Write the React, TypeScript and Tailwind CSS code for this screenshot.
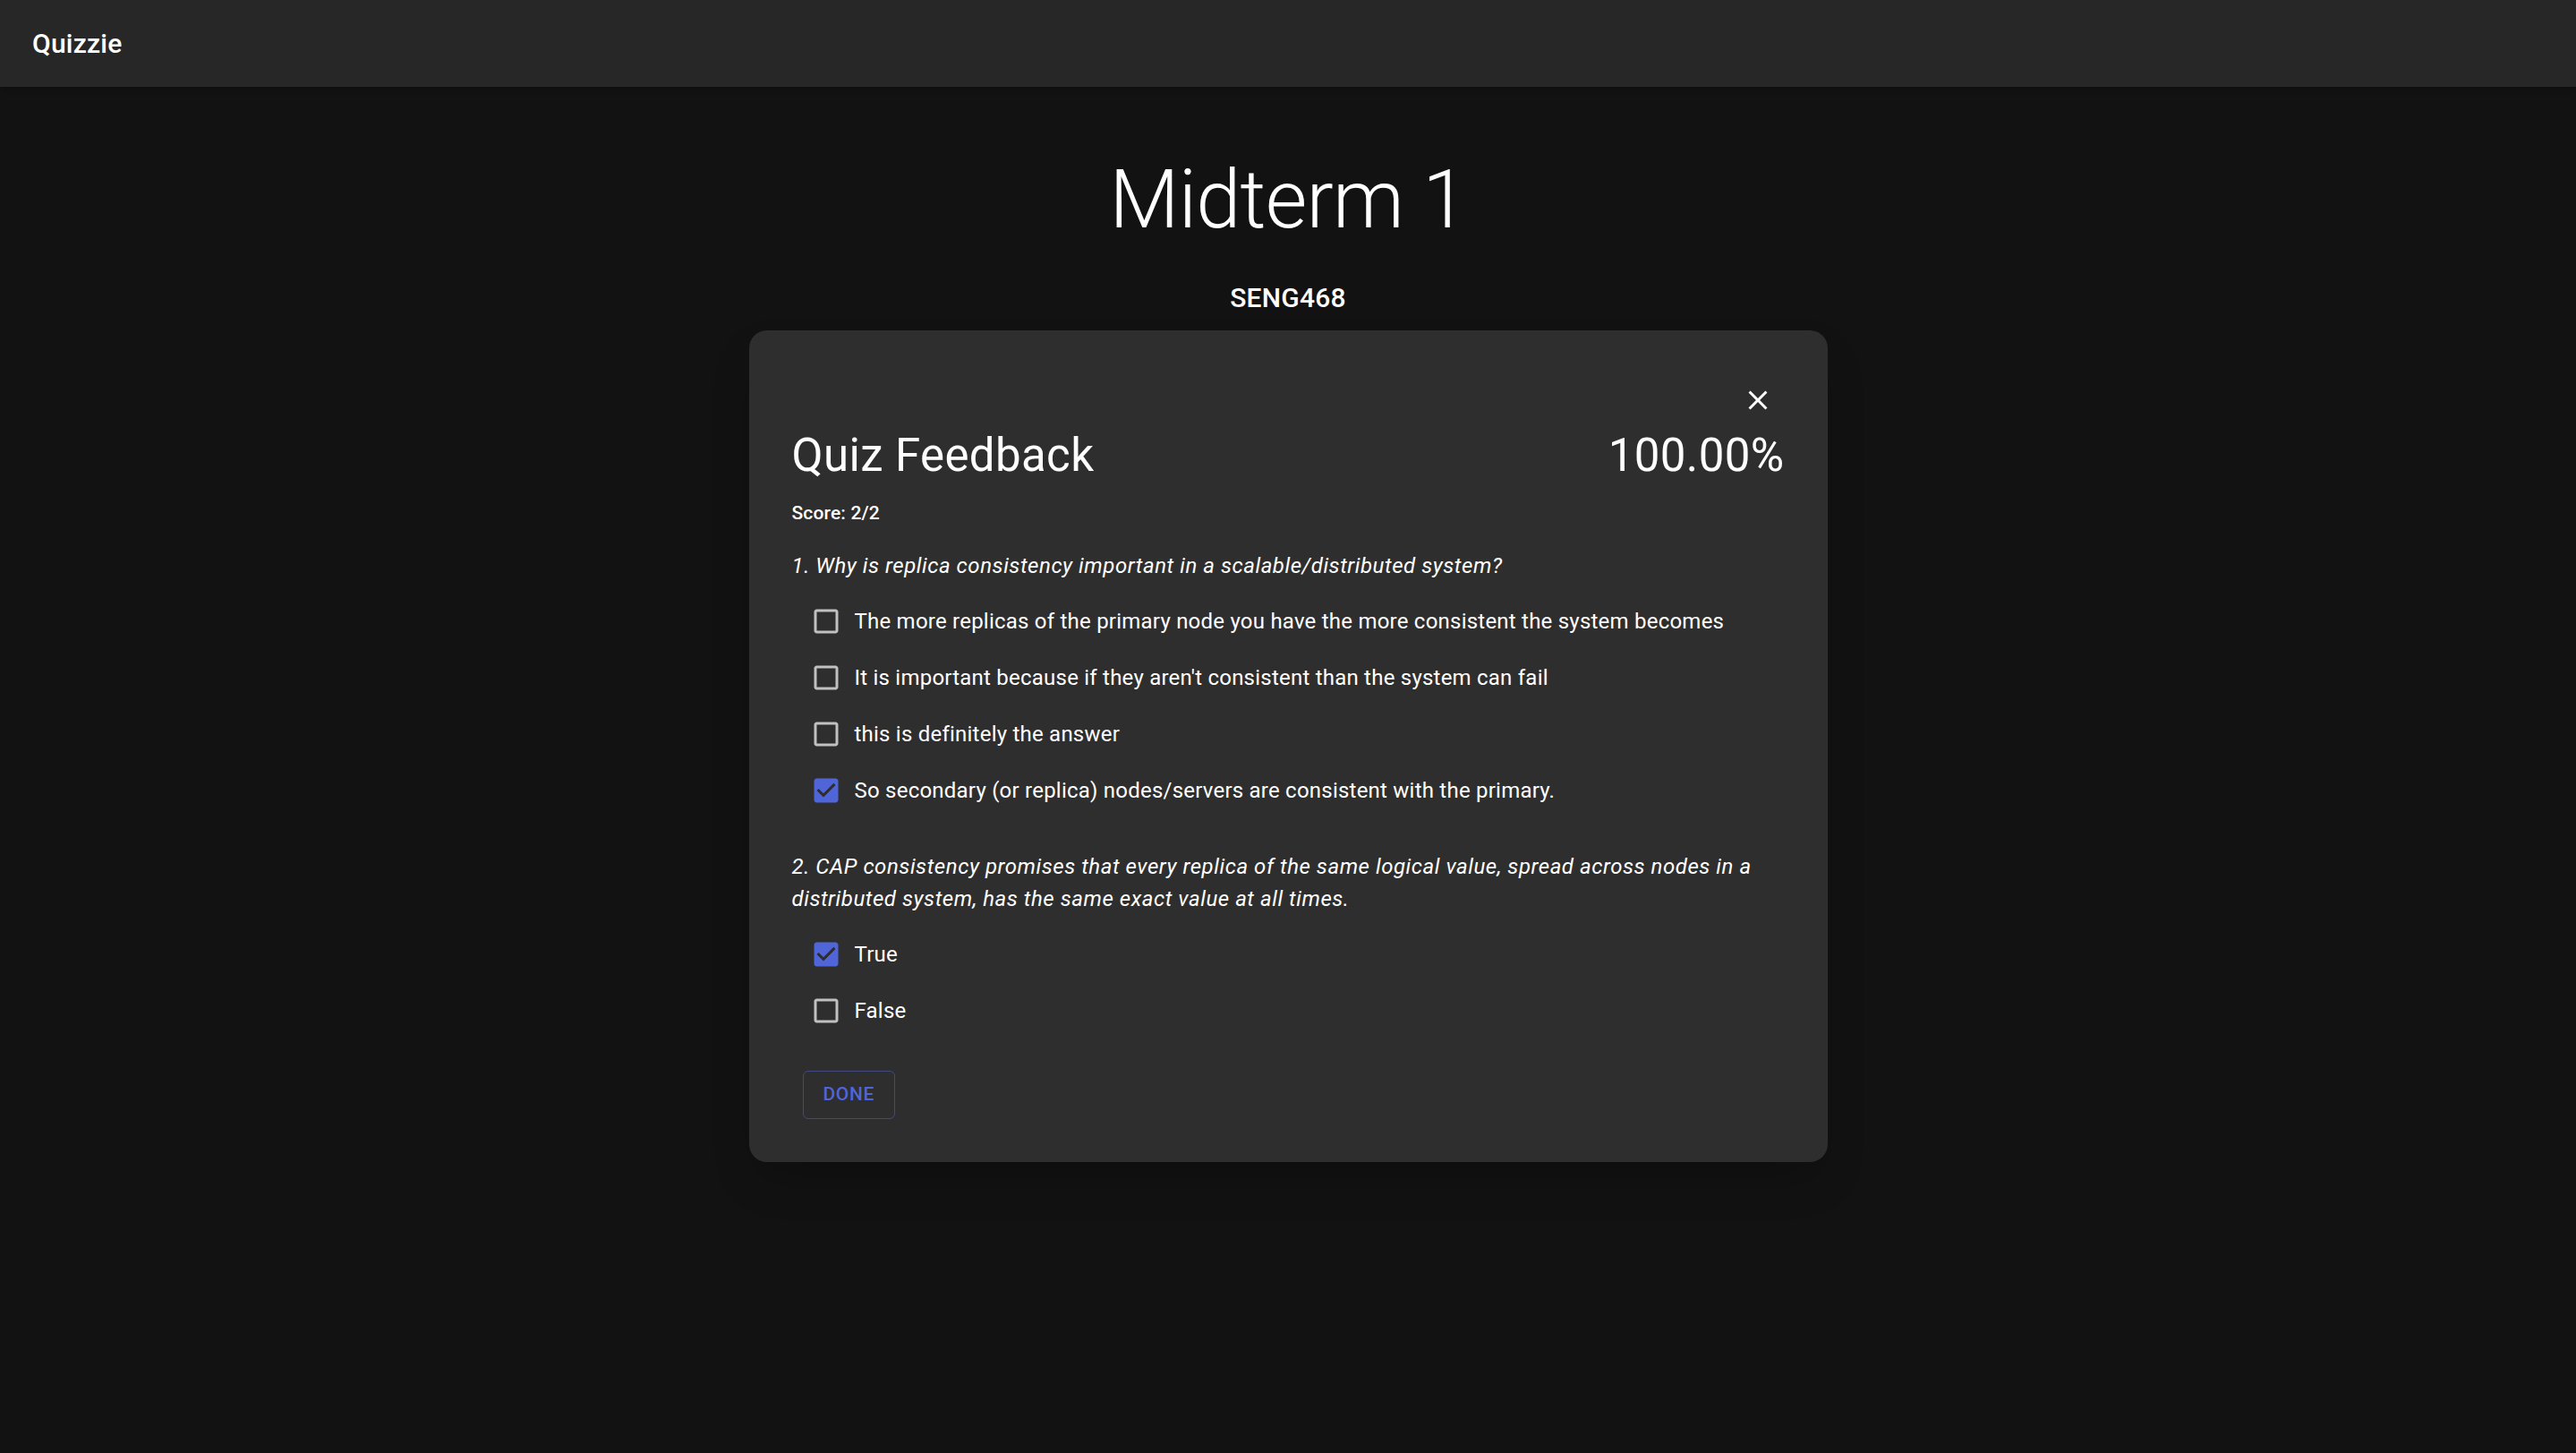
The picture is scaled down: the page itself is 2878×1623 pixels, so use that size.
const questions = [
    {
        text: "1. Why is replica consistency important in a scalable/distributed system?",
        options: [
            {label: "The more replicas of the primary node you have the more consistent the system becomes", checked: false},
            {label: "It is important because if they aren't consistent than the system can fail", checked: false},
            {label: "this is definitely the answer", checked: false},
            {label: "So secondary (or replica) nodes/servers are consistent with the primary.", checked: true},
        ],
    },
    {
        text: "2. CAP consistency promises that every replica of the same logical value, spread across nodes in a distributed system, has the same exact value at all times.",
        options: [
            {label: "True", checked: true},
            {label: "False", checked: false},
        ],
    },
];

const CheckIcon = ({checked}: { checked: boolean }) => (
    <svg viewBox="0 0 24 24" className="w-[36px] h-[36px]">
        {checked ? (
            <path
                fill="#5065d8"
                d="M19 3H5c-1.11 0-2 .9-2 2v14c0 1.1.89 2 2 2h14c1.11 0 2-.9 2-2V5c0-1.1-.89-2-2-2zm-9 14l-5-5 1.41-1.41L10 14.17l7.59-7.59L19 8l-9 9z"
            />
        ) : (
            <path
                fill="#c0c0c0"
                d="M19 5v14H5V5h14m0-2H5c-1.11 0-2 .9-2 2v14c0 1.1.89 2 2 2h14c1.1 0 2-.9 2-2V5c0-1.1-.9-2-2-2z"
            />
        )}
    </svg>
);

const App = () => {
    return (
        <div className="min-h-screen bg-[#121212] text-white font-['Roboto',sans-serif]">
            <header className="h-[97px] bg-[#272727] flex items-center px-[36px] shadow-md">
                <span className="text-[30px] font-medium leading-[1.6] tracking-[0.225px]">Quizzie</span>
            </header>
            <main className="flex flex-col items-center">
                <h1 className="mt-[73px] text-[90px] font-light leading-[1.2] tracking-[-0.75px]">Midterm 1</h1>
                <div className="mt-[31px] text-[30px] font-medium leading-[1.6] tracking-[0.225px]">SENG468</div>
                <div className="mt-[12px] w-[1205px] rounded-[20px] bg-[#2e2e2e] p-[48px] shadow-2xl">
                    <div className="flex justify-end">
                        <button className="w-[60px] h-[60px] flex items-center justify-center">
                            <svg viewBox="0 0 24 24" className="w-[36px] h-[36px]">
                                <path
                                    fill="#ffffff"
                                    d="M19 6.41 17.59 5 12 10.59 6.41 5 5 6.41 10.59 12 5 17.59 6.41 19 12 13.41 17.59 19 19 17.59 13.41 12z"
                                />
                            </svg>
                        </button>
                    </div>
                    <div className="flex justify-between items-baseline">
                        <h2 className="text-[51px] font-normal leading-[63px] tracking-[0.375px]">Quiz Feedback</h2>
                        <span className="text-[51px] font-normal leading-[63px] tracking-[0.375px]">100.00%</span>
                    </div>
                    <div className="mt-[17px] text-[21px] font-medium leading-[33px] tracking-[0.15px]">Score: 2/2</div>
                    {questions.map((q, i) => (
                        <div key={i} className={i === 0 ? "mt-[24px]" : "mt-[36px]"}>
                            <p className="italic text-[24px] leading-[36px] tracking-[0.55px]">{q.text}</p>
                            <div className="mt-[12px] ml-[7px] flex flex-col">
                                {q.options.map((o) => (
                                    <label key={o.label} className="flex items-center h-[63px]">
                                        <span className="w-[63px] h-[63px] flex items-center justify-center">
                                            <CheckIcon checked={o.checked}/>
                                        </span>
                                        <span className="text-[24px] leading-[36px] tracking-[0.225px]">{o.label}</span>
                                    </label>
                                ))}
                            </div>
                        </div>
                    ))}
                    <button
                        className="mt-[36px] ml-[12px] h-[54px] px-[22px] border border-[#5065d8]/50 rounded-[6px] text-[21px] font-medium tracking-[0.6px] uppercase text-[#5065d8]">
                        Done
                    </button>
                </div>
            </main>
        </div>
    );
};

export default App;
